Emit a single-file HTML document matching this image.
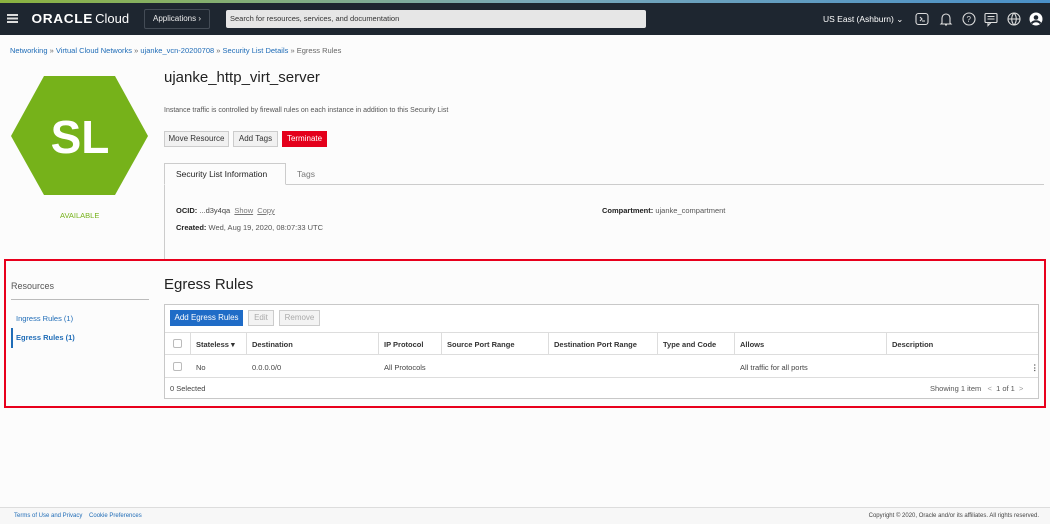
<!DOCTYPE html>
<html><head><meta charset="utf-8"><style>
*{box-sizing:border-box;margin:0;padding:0}
body{width:1050px;height:524px;overflow:hidden;background:#fcfcfc;font-family:"Liberation Sans",Arial,sans-serif;color:#333;position:relative}
.abs{position:absolute}
.hdr{left:0;top:0;width:1050px;height:35px;background:#1e2630}
.strip{left:0;top:0;width:1050px;height:3px;background:linear-gradient(90deg,#8bb23f,#7aa9b8,#4a90c8)}
a{color:#1f6cb7;text-decoration:none}
.btn{position:absolute;height:16px;font-size:8px;line-height:14px;border:1px solid #ccc;background:#f1f1f1;text-align:center;color:#333}
.tbl{left:164px;top:304px;width:875px;height:95px;border:1px solid #c8c8c8;background:#fff}
.hl{position:absolute;left:0;width:873px;height:1px;background:#ddd}
.th{position:absolute;top:35px;font-size:7.5px;font-weight:bold;color:#333}
.td{position:absolute;top:58px;font-size:7.5px;color:#444}
.vl{position:absolute;top:28px;height:22px;width:1px;background:#ddd}
.cb{position:absolute;width:9px;height:9px;border:1px solid #bbb;border-radius:2px;background:#fff}
</style></head><body>
<div class="abs hdr"></div><div class="abs strip"></div>
<div class="abs" style="left:7px;top:14px;width:11px;height:1.5px;background:#ddd;box-shadow:0 3.5px 0 #ddd,0 7px 0 #ddd"></div>
<div class="abs" style="left:33px;top:12px;color:#fff;font-size:13px;line-height:14px"><span style="letter-spacing:0.6px;font-weight:bold;transform:scaleX(1.05);display:inline-block">ORACLE</span> <span style="font-weight:normal">Cloud</span></div>
<div class="abs" style="left:144px;top:9px;width:66px;height:20px;border:1px solid #444c56;border-radius:2px;color:#eee;font-size:8px;line-height:18px;text-align:center">Applications ›</div>
<div class="abs" style="left:226px;top:10px;width:420px;height:18px;background:#e6e6e6;border-radius:2px;font-size:7.5px;line-height:18px;padding-left:4px;color:#333">Search for resources, services, and documentation</div>
<div class="abs" style="left:823px;top:14px;color:#fff;font-size:8.5px">US East (Ashburn) ⌄</div>
<svg class="abs" style="left:914px;top:11px" width="130" height="16" viewBox="0 0 130 16" fill="none" stroke="#ddd" stroke-width="1.1">
<rect x="2" y="2.5" width="12" height="11" rx="2.5"/><path d="M6 6l2 2-2 2M8 10h3"/>
<path d="M28 12V7a4 4 0 0 1 8 0v5l1 1H27z M31 14h2"/>
<circle cx="55" cy="8" r="6"/><text x="52.5" y="11" font-size="8" fill="#ddd" stroke="none" font-family="Liberation Sans">?</text>
<rect x="71" y="2.5" width="12" height="9" rx="1"/><path d="M74 11.5l0 3 3-3M73.5 5.5h7M73.5 8h7"/>
<circle cx="100" cy="8" r="6"/><path d="M94 8h12M100 2c-3 3-3 9 0 12M100 2c3 3 3 9 0 12"/>
<circle cx="122" cy="8" r="6.5" fill="#fff" stroke="none"/><circle cx="122" cy="6.5" r="2.3" fill="#1e2630" stroke="none"/><path d="M117.5 12.5c2-3 7-3 9 0" stroke="#1e2630" stroke-width="2"/>
</svg>
<div class="abs" style="left:10px;top:46px;font-size:7.5px;color:#666"><a>Networking</a> » <a>Virtual Cloud Networks</a> » <a>ujanke_vcn-20200708</a> » <a>Security List Details</a> » Egress Rules</div>
<svg class="abs" style="left:0;top:0" width="160" height="200"><polygon points="44,76 115,76 148,136 115,195 44,195 11,136" fill="#76b21a"/><text x="80" y="153" text-anchor="middle" font-family="Liberation Sans" font-weight="bold" font-size="46" fill="#fff">SL</text></svg>
<div class="abs" style="left:60px;top:211px;font-size:7.5px;color:#76b21a">AVAILABLE</div>
<div class="abs" style="left:164px;top:69px;font-size:15px;color:#222">ujanke_http_virt_server</div>
<div class="abs" style="left:164px;top:107px;font-size:7px;color:#555">Instance traffic is controlled by firewall rules on each instance in addition to this Security List</div>
<div class="btn" style="left:164px;top:131px;width:65px;height:16px">Move Resource</div>
<div class="btn" style="left:233px;top:131px;width:45px;height:16px">Add Tags</div>
<div class="btn" style="left:282px;top:131px;width:45px;height:16px;background:#e4001b;border-color:#e4001b;color:#fff">Terminate</div>
<div class="abs" style="left:164px;top:184px;width:880px;height:1px;background:#ccc"></div>
<div class="abs" style="left:164px;top:163px;width:122px;height:22px;border:1px solid #ccc;border-bottom:1px solid #fcfcfc;font-size:8.5px;line-height:21px;padding-left:11px;color:#222">Security List Information</div>
<div class="abs" style="left:297px;top:169px;font-size:8.5px;color:#777">Tags</div>
<div class="abs" style="left:164px;top:185px;width:1px;height:75px;background:#ccc"></div>
<div class="abs" style="left:176px;top:206px;font-size:7.5px;color:#444"><b style="color:#222">OCID:</b> ...d3y4qa &nbsp;<u style="color:#777">Show</u> &nbsp;<u style="color:#777">Copy</u></div>
<div class="abs" style="left:176px;top:223px;font-size:7.5px;color:#555"><b style="color:#222">Created:</b> Wed, Aug 19, 2020, 08:07:33 UTC</div>
<div class="abs" style="left:602px;top:206px;font-size:7.5px;color:#555"><b style="color:#222">Compartment:</b> ujanke_compartment</div>
<div class="abs" style="left:4px;top:259px;width:1042px;height:149px;border:2.5px solid #e8001c"></div>
<div class="abs" style="left:11px;top:281px;font-size:9px;color:#555">Resources</div>
<div class="abs" style="left:11px;top:299px;width:138px;height:1px;background:#bbb"></div>
<div class="abs" style="left:16px;top:314px;font-size:7.5px"><a>Ingress Rules (1)</a></div>
<div class="abs" style="left:11px;top:328px;width:2px;height:20px;background:#1f6cb7"></div>
<div class="abs" style="left:16px;top:333px;font-size:7.5px;font-weight:bold"><a>Egress Rules (1)</a></div>
<div class="abs" style="left:164px;top:276px;font-size:15px;color:#222">Egress Rules</div>
<div class="abs tbl">
<div class="btn" style="left:5px;top:5px;width:73px;background:#1f6cc7;border-color:#1f6cc7;color:#fff">Add Egress Rules</div>
<div class="btn" style="left:83px;top:5px;width:26px;color:#aaa;background:#f3f3f3">Edit</div>
<div class="btn" style="left:114px;top:5px;width:41px;color:#aaa;background:#f3f3f3">Remove</div>
<div class="hl" style="top:27px"></div><div class="hl" style="top:49px"></div><div class="hl" style="top:72px"></div>
<div class="vl" style="left:25px"></div><div class="vl" style="left:81px"></div><div class="vl" style="left:213px"></div><div class="vl" style="left:276px"></div><div class="vl" style="left:383px"></div><div class="vl" style="left:492px"></div><div class="vl" style="left:569px"></div><div class="vl" style="left:721px"></div>
<div class="cb" style="left:8px;top:34px"></div><div class="cb" style="left:8px;top:57px"></div>
<div class="th" style="left:31px">Stateless ▾</div><div class="th" style="left:87px">Destination</div><div class="th" style="left:219px">IP Protocol</div><div class="th" style="left:282px">Source Port Range</div><div class="th" style="left:389px">Destination Port Range</div><div class="th" style="left:498px">Type and Code</div><div class="th" style="left:575px">Allows</div><div class="th" style="left:727px">Description</div>
<div class="td" style="left:31px">No</div><div class="td" style="left:87px">0.0.0.0/0</div><div class="td" style="left:219px">All Protocols</div><div class="td" style="left:575px">All traffic for all ports</div><div class="td" style="left:866px;font-weight:bold">⋮</div>
<div class="abs" style="left:5px;top:79px;font-size:7.5px;color:#444">0 Selected</div>
<div class="abs" style="left:765px;top:79px;font-size:7.5px;color:#555">Showing 1 item &nbsp;&nbsp;<span style="color:#999">&lt;</span>&nbsp; 1 of 1 &nbsp;<span style="color:#999">&gt;</span></div>
</div>
<div class="abs" style="left:0;top:507px;width:1050px;height:17px;background:#f7f7f7;border-top:1px solid #ddd"></div>
<div class="abs" style="left:14px;top:513px;font-size:6px"><a>Terms of Use and Privacy</a> &nbsp;&nbsp; <a>Cookie Preferences</a></div>
<div class="abs" style="right:11px;top:513px;font-size:6px;color:#444">Copyright © 2020, Oracle and/or its affiliates. All rights reserved.</div>
</body></html>
